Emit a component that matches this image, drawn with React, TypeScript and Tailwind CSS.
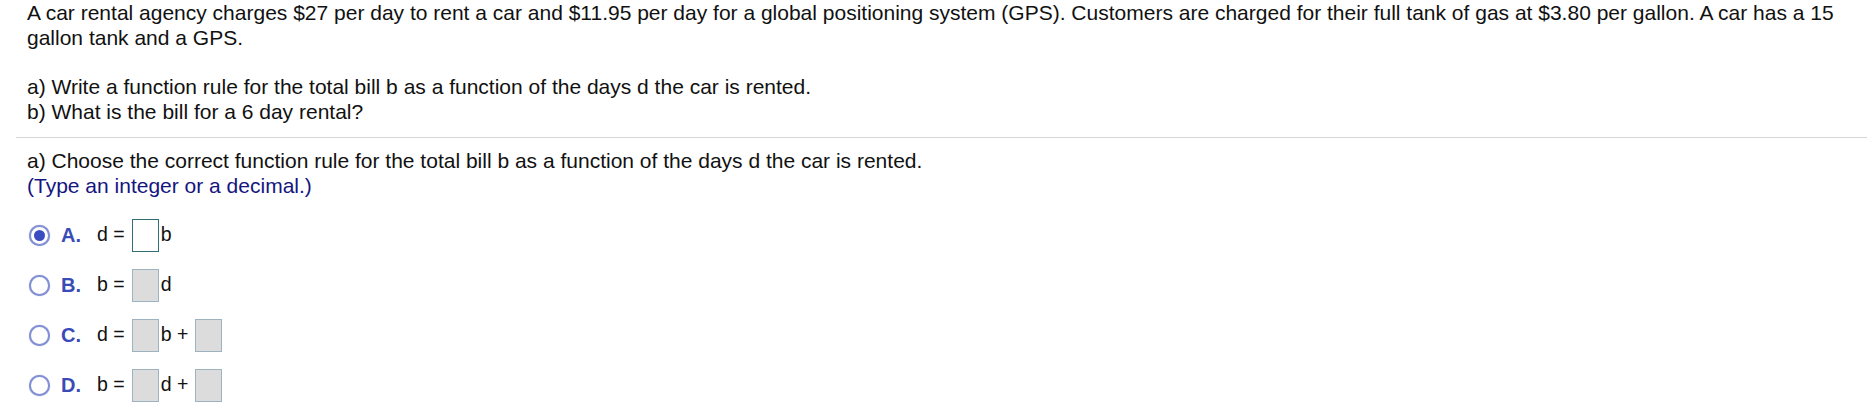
const FONT = { fontFamily: '"Liberation Sans", Arial, sans-serif' };

type Part = { t: "text"; v: string } | { t: "box"; active?: boolean };

const options: { label: string; parts: Part[] }[] = [
	{ label: "A.", parts: [{ t: "text", v: "d =" }, { t: "box", active: true }, { t: "text", v: "b" }] },
	{ label: "B.", parts: [{ t: "text", v: "b =" }, { t: "box" }, { t: "text", v: "d" }] },
	{
		label: "C.",
		parts: [{ t: "text", v: "d =" }, { t: "box" }, { t: "text", v: "b +" }, { t: "box" }],
	},
	{
		label: "D.",
		parts: [{ t: "text", v: "b =" }, { t: "box" }, { t: "text", v: "d +" }, { t: "box" }],
	},
];

function Radio({ checked }: { checked: boolean }) {
	return (
		<span className="flex h-[21px] w-[21px] items-center justify-center rounded-full border-2 border-[#8490d4] bg-white shadow-[0_0_1px_#8490d4]">
			{checked && <span className="h-[11px] w-[11px] rounded-full bg-[#3b4cc0]" />}
		</span>
	);
}

function AnswerBox({ active }: { active?: boolean }) {
	return active ? (
		<span className="ml-[7px] mr-[2px] inline-block h-[33px] w-[27px] border border-[#2f6f74] bg-white" />
	) : (
		<span className="ml-[7px] mr-[2px] inline-block h-[33px] w-[27px] border border-[#9db3c0] bg-[#dcdcdc]" />
	);
}

export default function App() {
	const selected = 0;

	return (
		<div className="min-h-[419px] bg-white pl-4 pr-1 text-[#111]" style={FONT}>
			<div className="pl-[11px] text-[21px] leading-[25px]">
				<p>
					A car rental agency charges $27 per day to rent a car and $11.95 per day for a global
					positioning system (GPS). Customers are charged for their full tank of gas at $3.80 per
					gallon. A car has a 15 gallon tank and a GPS.
				</p>
				<p className="mt-6">a) Write a function rule for the total bill b as a function of the days d the car is rented.</p>
				<p>b) What is the bill for a 6 day rental?</p>
			</div>

			<div className="mt-[13px] border-t border-[#d6d6d6]" />

			<div className="mt-[10px] pl-[11px] text-[21px] leading-[25px]">
				<p>a) Choose the correct function rule for the total bill b as a function of the days d the car is rented.</p>
				<p className="text-[#15157f]">(Type an integer or a decimal.)</p>
			</div>

			<div className="mt-3 flex flex-col">
				{options.map((opt, i) => (
					<div key={opt.label} className="flex h-[50px] items-center pl-[13px]">
						<Radio checked={i === selected} />
						<span className="ml-[11px] w-[36px] text-[20px] font-bold text-[#3a4bb8]">{opt.label}</span>
						<span className="flex items-center text-[19.5px]">
							{opt.parts.map((p, j) =>
								p.t === "text" ? (
									<span key={j} className="whitespace-pre">
										{p.v}
									</span>
								) : (
									<AnswerBox key={j} active={p.active} />
								),
							)}
						</span>
					</div>
				))}
			</div>
		</div>
	);
}
